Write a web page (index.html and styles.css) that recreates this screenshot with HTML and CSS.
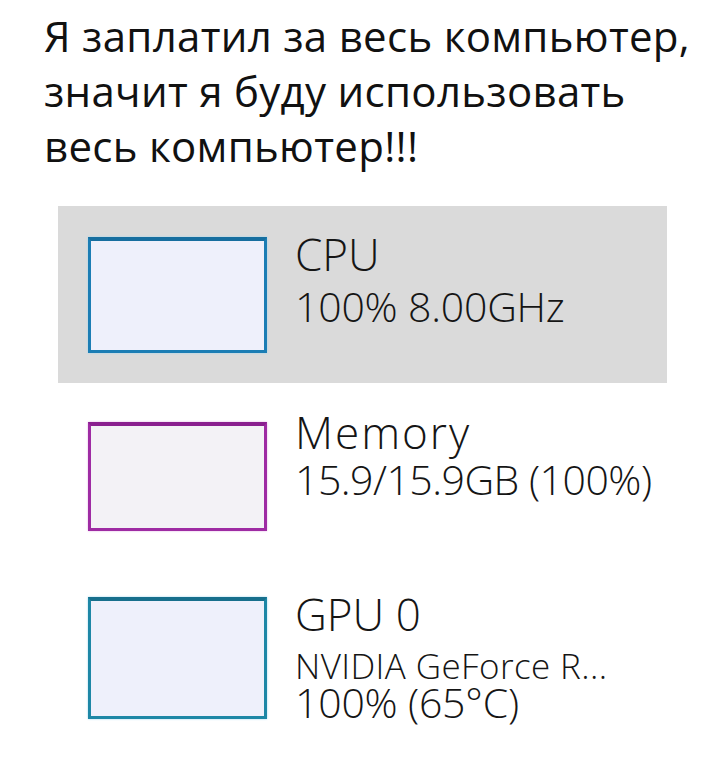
FILE: index.html
```html
<!DOCTYPE html>
<html>
<head>
  <meta charset="UTF-8">
  <title>Весь компьютер</title>
  <link rel="stylesheet" href="styles.css">
</head>
<body>
<h1 class="caption">Я заплатил за весь компьютер,<br>значит я буду использовать<br>весь компьютер!!!</h1>
<div class="list">
  <div class="item item-cpu">
    <div class="graph"></div>
    <div class="info">
      <div class="name">CPU</div>
      <div class="value">100% 8.00GHz</div>
    </div>
  </div>
  <div class="item item-mem">
    <div class="graph"></div>
    <div class="info">
      <div class="name">Memory</div>
      <div class="value">15.9/15.9GB (100%)</div>
    </div>
  </div>
  <div class="item item-gpu">
    <div class="graph"></div>
    <div class="info">
      <div class="name">GPU 0</div>
      <div class="value small">NVIDIA GeForce R...</div>
      <div class="value">100% (65°C)</div>
    </div>
  </div>
</div>
</body>
</html>
```
FILE: styles.css
```css
body {
  margin: 0; padding: 0;
  background: #fff;
  color: #111;
}
.caption {
  margin: 0; padding: 8px 0 0 44px;
  font-family: "Open Sans", sans-serif;
  font-weight: normal;
  font-size: 42px;
  line-height: 55px;
  letter-spacing: 0.3px;
}
.list {
  margin: 33px 0 0 58px;
  width: 609px;
}
.item {
  display: flex;
  align-items: flex-start;
  box-sizing: border-box;
  padding: 31px 0 0 30px;
  height: 177px;
}
.graph {
  box-sizing: border-box;
  width: 179px; height: 116px;
  border: 3px solid #1b7db4;
  border-top: 4px solid #166e9f;
  background: #eef0fb;
  box-shadow: 0 0 2px #9fd6ee;
}
.info {
  margin: -5px 0 0 28px;
  font-family: "Open Sans", sans-serif;
  font-weight: 300;
  color: #151515;
}
.name { font-size: 44px; line-height: 44px; }
.value { font-size: 41px; line-height: 42px; margin-top: 9px; letter-spacing: -0.2px; }

/* cpu row is the selected one */
.item-cpu { background: #dadada; }

.item-mem { padding-top: 39px; height: 175px; }
.item-mem .graph { height: 109px; border-color: #9e2ba3; border-top-color: #8a1f8f; background: #f3f2f6; box-shadow: 0 0 2px #e3b5e6; }
.item-mem .info { margin-top: -12px; }
.item-mem .name { letter-spacing: 2px; }
.item-mem .value { margin-top: 4px; letter-spacing: -0.5px; }

.item-gpu { padding-top: 39px; }
.item-gpu .graph { height: 122px; border-color: #1d87a6; border-top-color: #176f8c; }
.item-gpu .value { margin-top: -1px; }
.item-gpu .value.small { font-size: 35px; line-height: 32px; margin-top: 14px; letter-spacing: 0.4px; }
```
